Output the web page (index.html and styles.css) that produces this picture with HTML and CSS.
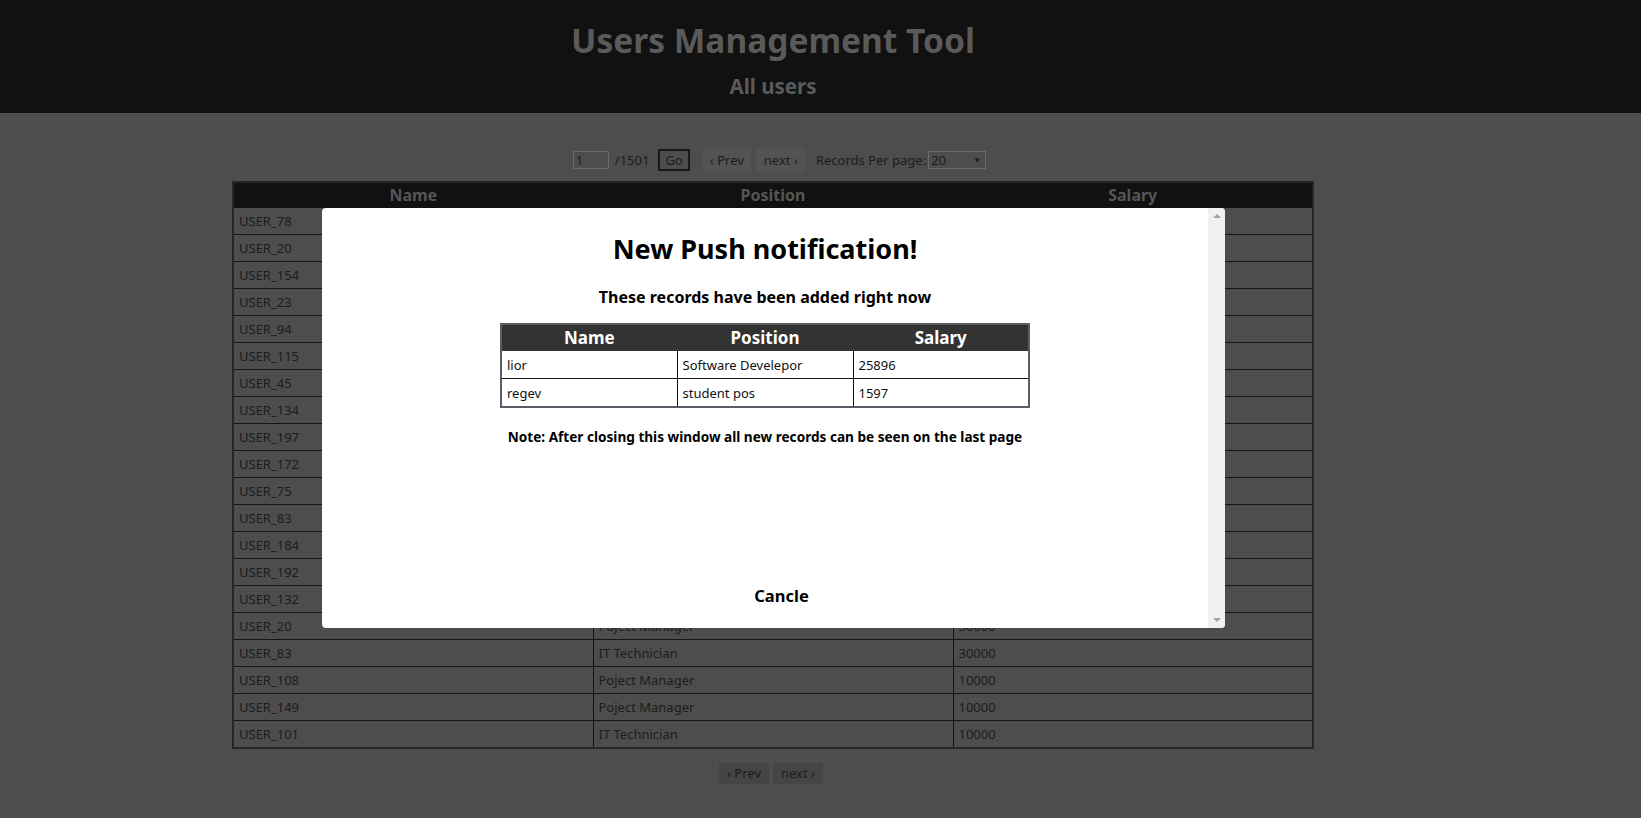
FILE: index.html
```html
<!DOCTYPE html>
<html>
<head>
<meta charset="utf-8">
<link rel="stylesheet" href="styles.css">
</head>
<body>
<header class="top">
  <div class="wrap">
    <h1 class="title">Users Management Tool</h1>
    <h2 class="subtitle">All users</h2>
  </div>
</header>
<main class="wrap main">
  <div class="pager pager-top">
    <span class="page-input">1</span>
    <span class="total">/1501</span>
    <span class="go">Go</span>
    <span class="nav nav-top">&lsaquo; Prev</span>
    <span class="nav nav-top">next &rsaquo;</span>
    <span class="rpp">Records Per page:</span>
    <span class="select"><span>20</span><span class="caret">&#9660;</span></span>
  </div>
  <table class="users">
    <thead>
      <tr><th>Name</th><th>Position</th><th>Salary</th></tr>
    </thead>
    <tbody>
      <tr><td>USER_78</td><td>IT Technician</td><td>30000</td></tr>
      <tr><td>USER_20</td><td>Pojcet Manager</td><td>10000</td></tr>
      <tr><td>USER_154</td><td>IT Technician</td><td>30000</td></tr>
      <tr><td>USER_23</td><td>Pojcet Manager</td><td>10000</td></tr>
      <tr><td>USER_94</td><td>IT Technician</td><td>30000</td></tr>
      <tr><td>USER_115</td><td>Pojcet Manager</td><td>10000</td></tr>
      <tr><td>USER_45</td><td>IT Technician</td><td>30000</td></tr>
      <tr><td>USER_134</td><td>Pojcet Manager</td><td>30000</td></tr>
      <tr><td>USER_197</td><td>IT Technician</td><td>10000</td></tr>
      <tr><td>USER_172</td><td>Pojcet Manager</td><td>30000</td></tr>
      <tr><td>USER_75</td><td>IT Technician</td><td>10000</td></tr>
      <tr><td>USER_83</td><td>Pojcet Manager</td><td>30000</td></tr>
      <tr><td>USER_184</td><td>IT Technician</td><td>10000</td></tr>
      <tr><td>USER_192</td><td>Pojcet Manager</td><td>30000</td></tr>
      <tr><td>USER_132</td><td>IT Technician</td><td>10000</td></tr>
      <tr><td>USER_20</td><td>Poject Manager</td><td>30000</td></tr>
      <tr><td>USER_83</td><td>IT Technician</td><td>30000</td></tr>
      <tr><td>USER_108</td><td>Poject Manager</td><td>10000</td></tr>
      <tr><td>USER_149</td><td>Poject Manager</td><td>10000</td></tr>
      <tr><td>USER_101</td><td>IT Technician</td><td>10000</td></tr>
    </tbody>
  </table>
  <div class="pager pager-bottom">
    <span class="nav nav-bottom">&lsaquo; Prev</span>
    <span class="nav nav-bottom">next &rsaquo;</span>
  </div>
</main>

<div class="modal">
  <div class="modal-body">
    <h2 class="modal-title">New Push notification!</h2>
    <h3 class="modal-sub">These records have been added right now</h3>
    <table class="added">
      <thead>
        <tr><th>Name</th><th>Position</th><th>Salary</th></tr>
      </thead>
      <tbody>
        <tr><td>lior</td><td>Software Develepor</td><td>25896</td></tr>
        <tr><td>regev</td><td>student pos</td><td>1597</td></tr>
      </tbody>
    </table>
    <p class="note">Note: After closing this window all new records can be seen on the last page</p>
    <div class="spacer"></div>
    <div class="cancel">Cancle</div>
  </div>
  <div class="scrollbar">
    <span class="arrow-up"></span>
    <span class="arrow-down"></span>
  </div>
</div>
</body>
</html>
```

FILE: styles.css
```css
html, body {
  margin: 0;
  padding: 0;
}
body {
  background: #4d4d4d;
  font-family: "Noto Sans", "Open Sans", sans-serif;
  color: #1c1c1c;
  width: 1641px;
  height: 818px;
  overflow: hidden;
  position: relative;
}
.wrap {
  width: 1546px;
}
.top {
  background: #111111;
  height: 113px;
}
.top .wrap {
  display: flex;
  flex-direction: column;
  align-items: center;
  padding-top: 20px;
}
.title {
  margin: 0;
  font-size: 33.5px;
  line-height: 40px;
  font-weight: 700;
  color: #5a5a5a;
}
.subtitle {
  margin: 12px 0 0;
  font-size: 20.5px;
  line-height: 28px;
  font-weight: 700;
  color: #5a5a5a;
}
.main {
  padding-top: 35px;
  display: flex;
  flex-direction: column;
  align-items: center;
}
.pager {
  display: flex;
  align-items: center;
  height: 24px;
  font-size: 13px;
  color: #1c1c1c;
}
.pager-top {
  padding-left: 13px;
}
.page-input {
  width: 30px;
  height: 16px;
  line-height: 16px;
  border: 1px solid #6a6a6a;
  padding: 0 2px;
  box-sizing: content-box;
  font-size: 13px;
  margin-right: 6px;
}
.total {
  margin-right: 9px;
}
.go {
  height: 18px;
  line-height: 18px;
  padding: 0 5px;
  border: 2px solid #1a1a1a;
  margin-right: 13px;
}
.nav {
  height: 24px;
  line-height: 24px;
  padding: 0 7px;
  margin-right: 5px;
}
.nav-top {
  background: #535353;
}
.nav-top + .nav-top {
  padding: 0 8px;
}
.rpp {
  margin-left: 5px;
  margin-right: 2px;
}
.select {
  width: 50px;
  height: 16px;
  border: 1px solid #6a6a6a;
  display: flex;
  justify-content: space-between;
  align-items: center;
  padding: 0 4px 0 2px;
  box-sizing: content-box;
  line-height: 16px;
}
.caret {
  font-size: 8px;
  color: #1c1c1c;
}
.users {
  margin-top: 9px;
  width: 1082px;
  border-collapse: collapse;
  border: 2px solid #262626;
  table-layout: fixed;
}
.users th {
  background: #111111;
  color: #565656;
  font-size: 16px;
  font-weight: 700;
  height: 24px;
  padding: 0;
  line-height: 24px;
  border: 1px solid #111111;
}
.users td {
  border: 1px solid #151515;
  padding: 0 5px;
  height: 26px;
  font-size: 13px;
  color: #1c1c1c;
}
.pager-bottom {
  margin-top: 14px;
  height: 21px;
}
.nav-bottom {
  background: #454545;
  height: 21px;
  line-height: 21px;
  padding: 0 8px;
  margin-right: 4px;
}
.modal {
  position: absolute;
  left: 322px;
  top: 208px;
  width: 903px;
  height: 420px;
  background: #ffffff;
  border-radius: 4px;
  display: flex;
  overflow: hidden;
}
.modal-body {
  flex: 1;
  display: flex;
  flex-direction: column;
  align-items: center;
  padding-top: 22px;
  padding-bottom: 20px;
  color: #000;
}
.modal-title {
  margin: 0;
  font-size: 27px;
  line-height: 38px;
  font-weight: 700;
}
.modal-sub {
  margin: 18px 0 0;
  font-size: 16px;
  line-height: 22px;
  font-weight: 700;
}
.added {
  margin-top: 15px;
  width: 530px;
  border-collapse: collapse;
  border: 2px solid #5c5c66;
  table-layout: fixed;
}
.added th {
  background: #333333;
  color: #ffffff;
  font-size: 17px;
  font-weight: 700;
  height: 25px;
  line-height: 25px;
  padding: 0;
  border: 1px solid #333;
}
.added td {
  border: 1px solid #111;
  padding: 0 5px;
  height: 27px;
  font-size: 13px;
  color: #111;
}
.note {
  margin: 19px 0 0;
  font-size: 13.6px;
  line-height: 20px;
  font-weight: 700;
}
.spacer {
  flex: 1;
}
.cancel {
  font-size: 16.5px;
  font-weight: 700;
  line-height: 24px;
  padding-left: 33px;
}
.scrollbar {
  width: 17px;
  background: #f1f1f1;
  position: relative;
  display: flex;
  flex-direction: column;
  justify-content: space-between;
  align-items: center;
  padding: 6px 0;
}
.arrow-up {
  width: 0;
  height: 0;
  border-left: 4px solid transparent;
  border-right: 4px solid transparent;
  border-bottom: 4px solid #a3a3a3;
}
.arrow-down {
  width: 0;
  height: 0;
  border-left: 4px solid transparent;
  border-right: 4px solid transparent;
  border-top: 4px solid #a3a3a3;
}
```
